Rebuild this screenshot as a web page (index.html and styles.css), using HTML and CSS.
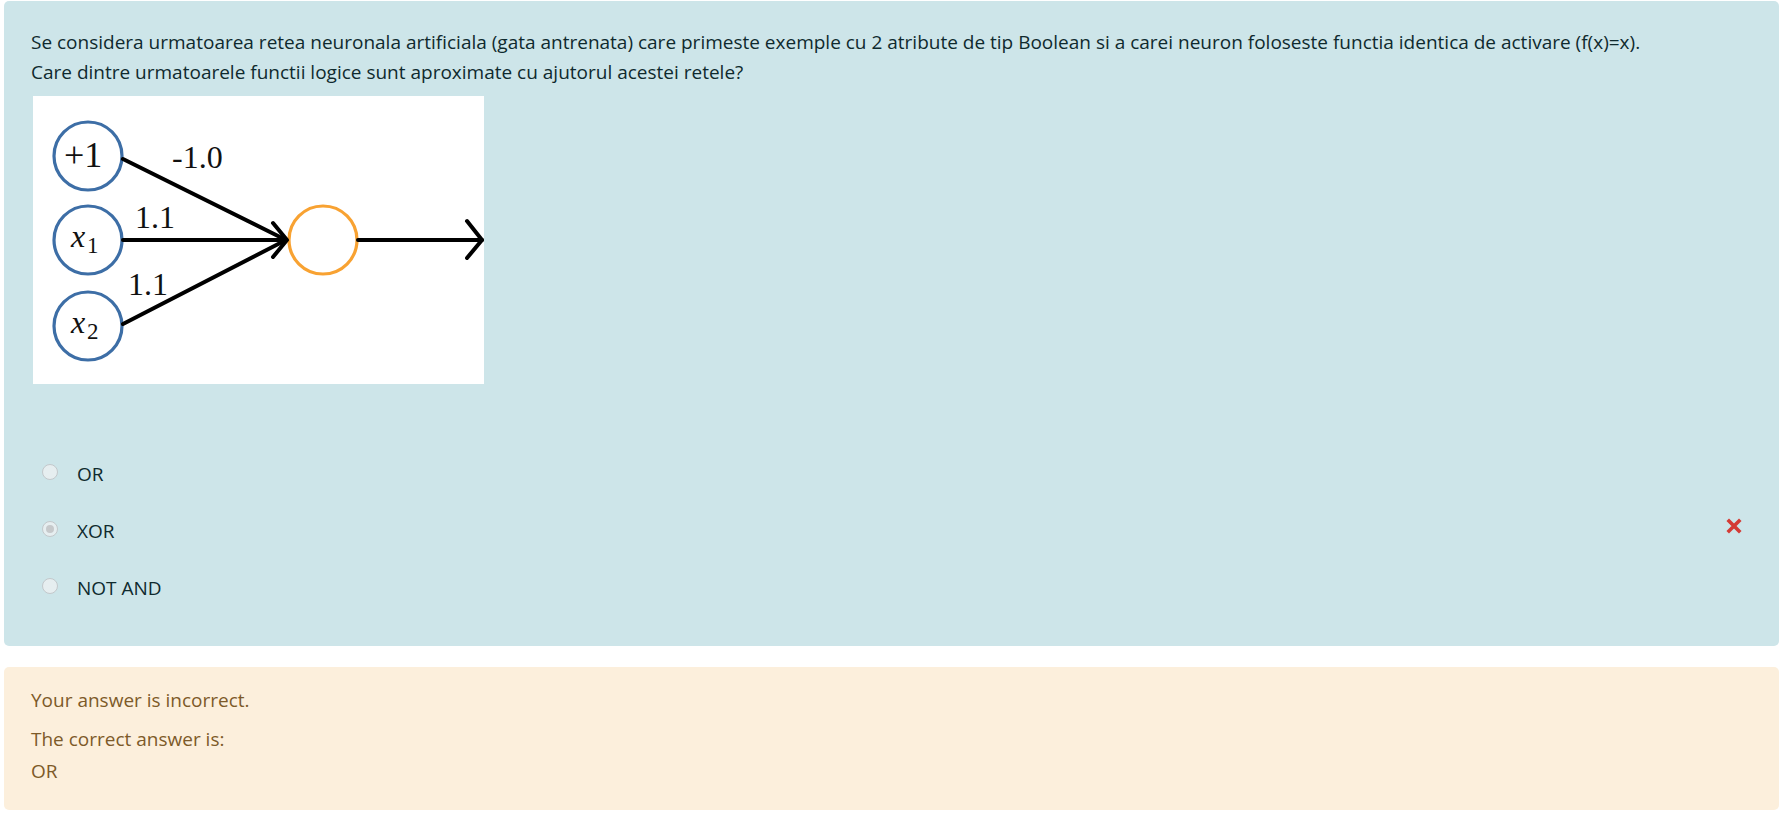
FILE: index.html
```html
<!DOCTYPE html>
<html lang="ro">
<head>
<meta charset="utf-8">
<title>Question</title>
<link rel="stylesheet" href="styles.css">
</head>
<body>
<div class="que">
  <div class="formulation">
    <div class="qtext">
      <p class="qline">Se considera urmatoarea retea neuronala artificiala (gata antrenata) care primeste exemple cu 2 atribute de tip Boolean si a carei neuron foloseste functia identica de activare (f(x)=x).</p>
      <p class="qline">Care dintre urmatoarele functii logice sunt aproximate cu ajutorul acestei retele?</p>
      <svg class="diagram" width="451" height="288" viewBox="0 0 451 288">
        <rect width="451" height="288" fill="#fff"/>
        <g fill="none" stroke="#3d6ea6" stroke-width="3.2">
          <circle cx="55" cy="60" r="34"/>
          <circle cx="55" cy="144" r="34"/>
          <circle cx="55" cy="230" r="34"/>
        </g>
        <circle cx="290" cy="144" r="34" fill="none" stroke="#f8a232" stroke-width="3.2"/>
        <g stroke="#000" stroke-width="4" fill="none" stroke-linecap="round" stroke-linejoin="round">
          <line x1="90" y1="63" x2="253" y2="144"/>
          <line x1="90" y1="144" x2="253" y2="144"/>
          <line x1="90" y1="228" x2="253" y2="144"/>
          <polyline points="240,127 254,144 240,161"/>
          <line x1="325" y1="144" x2="449" y2="144"/>
          <polyline points="434,125 449,144 434,162"/>
        </g>
        <g font-family="'Liberation Serif', 'DejaVu Serif', serif" fill="#111">
          <text x="139" y="72" font-size="32">-1.0</text>
          <text x="102" y="132" font-size="32">1.1</text>
          <text x="95" y="199" font-size="32">1.1</text>
          <text x="31" y="71" font-size="36">+1</text>
          <text x="38" y="151" font-size="32" font-style="italic">x</text>
          <text x="54" y="157" font-size="23">1</text>
          <text x="38" y="237" font-size="32" font-style="italic">x</text>
          <text x="54" y="243" font-size="23">2</text>
        </g>
      </svg>
    </div>
    <div class="answer">
      <div class="opt">
        <span class="radio"></span>
        <span class="label">OR</span>
      </div>
      <div class="opt">
        <span class="radio checked"></span>
        <span class="label">XOR</span>
        <svg class="wrong" width="16" height="16" viewBox="0 0 16 16">
          <path d="M3 3 L13 13 M13 3 L3 13" stroke="#d43b35" stroke-width="3.6" stroke-linecap="square"/>
        </svg>
      </div>
      <div class="opt">
        <span class="radio"></span>
        <span class="label">NOT AND</span>
      </div>
    </div>
  </div>
  <div class="outcome">
    <div class="feedback">Your answer is incorrect.</div>
    <div class="rightanswer">The correct answer is:<br>OR</div>
  </div>
</div>
</body>
</html>
```

FILE: styles.css
```css
html, body {
  margin: 0;
  padding: 0;
  background: #fff;
}
body {
  font-family: "Open Sans", "Noto Sans", sans-serif;
  font-size: 19px;
  line-height: 30px;
}
.que {
  padding: 1px 1px 0 4px;
}
.formulation {
  background: #cde5e9;
  color: #0f2a2e;
  border-radius: 5px;
  padding: 26px 37px 30px 27px;
}
.qline {
  margin: 0;
}
.diagram {
  display: block;
  margin: 9px 0 0 2px;
}
.answer {
  margin-top: 61px;
  display: flex;
  flex-direction: column;
}
.opt {
  height: 57px;
  display: flex;
  align-items: center;
}
.radio {
  width: 16px;
  height: 16px;
  box-sizing: border-box;
  border-radius: 50%;
  border: 1.5px solid #c3c8cb;
  background: #e6eef0;
  margin-left: 11px;
  margin-top: -3px;
  display: flex;
  align-items: center;
  justify-content: center;
  flex: none;
}
.radio.checked::after {
  content: "";
  width: 8px;
  height: 8px;
  border-radius: 50%;
  background: #c6c9cb;
}
.label {
  margin-left: 19px;
  color: #0f2a2e;
}
.wrong {
  margin-left: auto;
  margin-top: -9px;
}
.outcome {
  margin-top: 21px;
  background: #fcefdc;
  color: #7d5a29;
  border-radius: 5px;
  padding: 18px 27px 23px 27px;
}
.rightanswer {
  margin-top: 8px;
  line-height: 32px;
}
```
